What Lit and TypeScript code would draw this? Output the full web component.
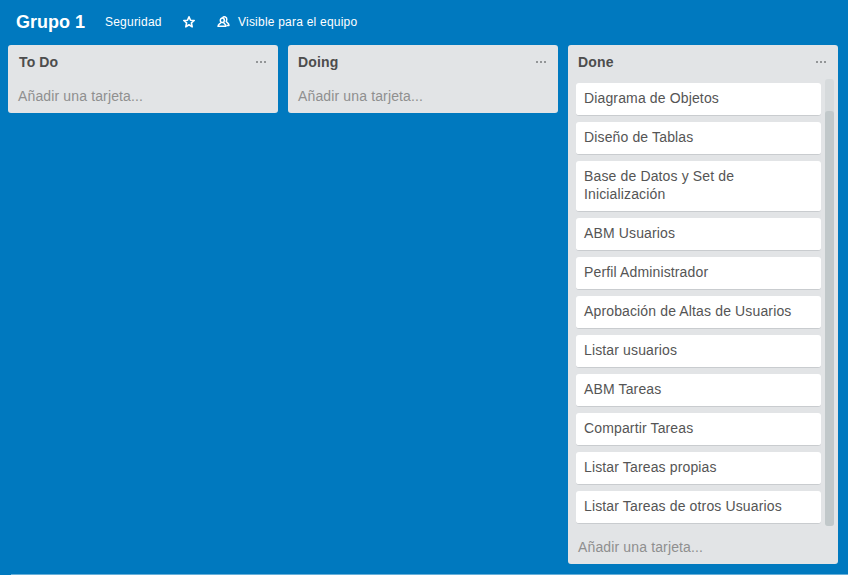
import { LitElement, html, css, svg } from "lit";
import { customElement, property } from "lit/decorators.js";

@customElement("board-header")
class BoardHeader extends LitElement {
  static styles = css`
    :host { display: flex; align-items: center; height: 45px; box-sizing: border-box; padding: 0 0 1px 16px; color: #fff; font-size: 12px; letter-spacing: 0.22px; }
    .title { width: 89px; margin: 0; font-size: 18px; line-height: 24px; font-weight: 700; letter-spacing: 0; white-space: nowrap; }
    .org { width: 77px; white-space: nowrap; }
    .star { width: 14px; height: 14px; margin-right: 21px; }
    .people { width: 13px; height: 14px; margin-right: 8px; }
    .visibility { white-space: nowrap; }
    svg { display: block; fill: none; stroke: #fff; stroke-linejoin: round; }
  `;
  render() {
    return html`
      <h1 class="title">Grupo 1</h1>
      <span class="org">Seguridad</span>
      <svg class="star" viewBox="0 0 14 14" stroke-width="1.6">
        <path d="M7 1.8 L8.5 5.2 L12.2 5.5 L9.4 7.9 L10.2 11.8 L7 9.8 L3.8 11.8 L4.6 7.9 L1.8 5.5 L5.5 5.2 Z" />
      </svg>
      <svg class="people" viewBox="0 0 13 14" stroke-width="1.5">
        <ellipse cx="5.3" cy="5.3" rx="2" ry="2.3" />
        <path d="M4 7.5 C3.4 8.9 1.2 8.8 1 11.3 H8.9 C8.7 8.9 7.2 8.9 6.6 7.5" />
        <path d="M5.4 2.7 C7.2 1.1 10 1.9 9.8 4.5 C9.7 5.5 9.1 6 9.3 6.7 C10 7.8 11.8 8 12 10.4 H9.4" />
      </svg>
      <span class="visibility">Visible para el equipo</span>
    `;
  }
}

@customElement("board-list")
class BoardList extends LitElement {
  @property() name = "";
  @property({ attribute: false }) cards: string[] = [];

  static styles = css`
    :host { display: flex; flex-direction: column; width: 270px; box-sizing: border-box; border-radius: 3px; background: #e2e4e6; letter-spacing: 0.14px; }
    .head { display: flex; justify-content: space-between; height: 34px; box-sizing: border-box; padding: 8px 12px 0 10px; }
    .name { margin: 0; font-size: 14px; line-height: 18px; font-weight: 700; color: #4d4d4d; }
    .name.first { padding-left: 1px; }
    .menu { width: 10px; height: 2px; margin-top: 8px; fill: #939597; }
    .body { display: flex; justify-content: space-between; height: 447px; padding: 0 4px 0 8px; }
    .cards { display: flex; flex-direction: column; gap: 6px; width: 245px; padding-top: 4px; }
    .card { box-sizing: border-box; padding: 6px 8px 8px; border-bottom: 1px solid #c9cccf; border-radius: 3px; background: #fff; color: #555; font-size: 14px; line-height: 18px; }
    .track { width: 9px; border-radius: 3px; background: #d6dadc; }
    .thumb { height: 415px; margin-top: 32px; border-radius: 3px; background: #c1c8ca; }
    .add { height: 34px; box-sizing: border-box; padding: 8px 10px; color: #8f8f8f; font-size: 14px; line-height: 18px; }
    .add.after-cards { height: 38px; padding-top: 12px; }
  `;
  render() {
    const filled = this.cards.length > 0;
    return html`
      <div class="head">
        <h2 class="name ${this.name === "To Do" ? "first" : ""}">${this.name}</h2>
        <svg class="menu" viewBox="0 0 10 2">
          ${[0, 4, 8].map((x) => svg`<rect x=${x} y="0" width="2" height="2" />`)}
        </svg>
      </div>
      ${filled
        ? html`<div class="body">
            <div class="cards">${this.cards.map((c) => html`<div class="card">${c}</div>`)}</div>
            <div class="track"><div class="thumb"></div></div>
          </div>`
        : ""}
      <div class="add ${filled ? "after-cards" : ""}">Añadir una tarjeta...</div>
    `;
  }
}

const lists = [
  { name: "To Do", cards: [] as string[] },
  { name: "Doing", cards: [] as string[] },
  {
    name: "Done",
    cards: [
      "Diagrama de Objetos",
      "Diseño de Tablas",
      "Base de Datos y Set de Inicialización",
      "ABM Usuarios",
      "Perfil Administrador",
      "Aprobación de Altas de Usuarios",
      "Listar usuarios",
      "ABM Tareas",
      "Compartir Tareas",
      "Listar Tareas propias",
      "Listar Tareas de otros Usuarios",
    ],
  },
];

@customElement("app-root")
class AppRoot extends LitElement {
  static styles = css`
    :host { display: flex; flex-direction: column; width: 848px; height: 575px; overflow: hidden; background: #0079bf; font-family: "Liberation Sans", Arial, sans-serif; }
    .lists { display: flex; flex: 1; align-items: flex-start; gap: 10px; padding-left: 8px; }
    .scroll-edge { height: 1px; margin-left: 11px; background: #66afd9; }
  `;
  render() {
    return html`
      <board-header></board-header>
      <main class="lists">
        ${lists.map((l) => html`<board-list .name=${l.name} .cards=${l.cards}></board-list>`)}
      </main>
      <div class="scroll-edge"></div>
    `;
  }
}
